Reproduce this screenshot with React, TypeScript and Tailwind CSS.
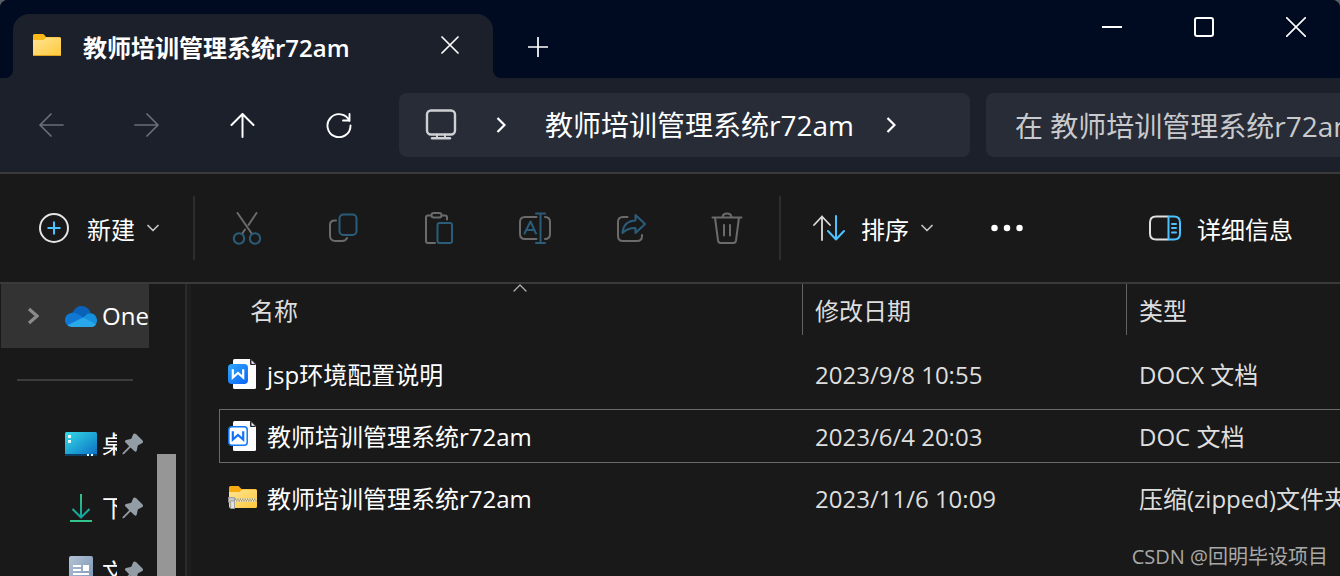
import type { ReactNode } from "react";

type IconProps = { w: number; h: number; children: ReactNode; className?: string };

function Icon({ w, h, children, className = "" }: IconProps) {
  return (
    <svg
      width={w}
      height={h}
      viewBox={`0 0 ${w} ${h}`}
      fill="none"
      stroke="currentColor"
      strokeWidth="2"
      strokeLinecap="round"
      strokeLinejoin="round"
      className={`shrink-0 ${className}`}
      aria-hidden="true"
    >
      {children}
    </svg>
  );
}

const GREY = "#6b6b6b";
const BLUE = "#2b5d7a";
const ACCENT = "#4cc2ff";

function FolderIcon() {
  return (
    <Icon w={28} h={22}>
      <defs>
        <linearGradient id="folder" x1="0" y1="0" x2="1" y2="1">
          <stop offset="0" stopColor="#ffe596" />
          <stop offset="1" stopColor="#ffc93a" />
        </linearGradient>
      </defs>
      <path d="M0 1.500Q0 0 1.500 0H9.500Q10.500 0 11.200 .8L13 3H26.500Q28 3 28 4.500V10H0Z" fill="#fbb917" stroke="none" />
      <path d="M0 6H10.500L13 3.400H26.600Q28 3.400 28 5V20.500Q28 22 26.500 22H1.500Q0 22 0 20.500Z" fill="url(#folder)" stroke="none" />
      <path d="M.5 21.500H27.500" stroke="#e0a21d" strokeWidth="1" />
    </Icon>
  );
}

function ZipIcon() {
  return (
    <Icon w={29} h={24}>
      <path d="M1 1.500Q1 0 2.500 0H10.500L13.500 3H27.500Q29 3 29 4.500V10H1Z" fill="#f7ab12" stroke="none" />
      <path d="M1 6H11.500L14 3.400H27.600Q29 3.400 29 5V20.500Q29 22 27.500 22H2.500Q1 22 1 20.500Z" fill="url(#folder)" stroke="none" />
      <path d="M7 14H28.500" stroke="#f1e6bd" strokeWidth="4" strokeLinecap="butt" />
      <path d="M7 13.200H28.500" stroke="#8d7a42" strokeWidth="1.200" strokeDasharray="1.200 1.200" strokeLinecap="butt" />
      <path d="M8.200 14.800H28.500" stroke="#8d7a42" strokeWidth="1.200" strokeDasharray="1.200 1.200" strokeLinecap="butt" />
      <path d="M.5 11.500H6.500V16H.5Z" fill="#c4c4c4" stroke="#a0a0a0" strokeWidth="1" />
      <path d="M3 15H6.500V22.500H3Z" fill="#e2e2e2" stroke="#a0a0a0" strokeWidth="1" />
    </Icon>
  );
}

function DocIcon({ filled }: { filled: boolean }) {
  return (
    <Icon w={29} h={31}>
      <defs>
        <linearGradient id="wps" x1="0" y1="0" x2="1" y2="1">
          <stop offset="0" stopColor="#2ea5ff" />
          <stop offset="1" stopColor="#0d66f5" />
        </linearGradient>
      </defs>
      <path d="M5 1.500Q5 0 6.500 0H22.500L28 5.500V28.500Q28 30 26.500 30H6.500Q5 30 5 28.500Z" fill="#fdfdfe" stroke="none" />
      <path d="M22 0V5Q22 6 23 6H28L22.500 0Z" fill="#22262e" stroke="none" />
      <path d="M23.500 1.500V4.800H26.800Z" fill="#fff" stroke="none" />
      <rect
        x=".8"
        y="5.800"
        width="18.400"
        height="18.400"
        rx="3"
        fill={filled ? "url(#wps)" : "#fff"}
        stroke={filled ? "url(#wps)" : "#1277f8"}
        strokeWidth="1.500"
      />
      <path
        d="M4.800 10.200V18.500L10 14L15.200 18.500V10.200"
        stroke={filled ? "#fff" : "#1272f5"}
        strokeWidth="2.200"
        strokeLinecap="butt"
        strokeLinejoin="miter"
      />
    </Icon>
  );
}

function OneDriveIcon() {
  return (
    <svg width="32" height="21" viewBox="0 0 32 21" className="shrink-0" aria-hidden="true">
      <path d="M7 8C9 2.500 12.500 0 16.500 0C21 0 24.500 3 25.800 7.200L20 12L9 9Z" fill="#0a62b8" />
      <path d="M12 7.500C7 5.500 0 8 0 14C0 17 1.600 19 3.500 20L19 11.800Z" fill="#0f78d4" />
      <path d="M18.500 11.500L22 8C27 5.500 32 9 32 14.500C32 17 30.500 18.500 30 19Z" fill="#1490df" />
      <path d="M2.500 19.300L18.500 11.200L31 18.500C29.500 20.500 28 21 26 21H7C5 21 3.500 20.300 2.500 19.300Z" fill="#28a8ea" />
    </svg>
  );
}

function DesktopIcon() {
  return (
    <svg width="32" height="24" viewBox="0 0 32 24" className="shrink-0" aria-hidden="true">
      <defs>
        <linearGradient id="desk" x1="0" y1="0" x2="1" y2="1">
          <stop offset="0" stopColor="#35dbe6" />
          <stop offset="1" stopColor="#0a6cc4" />
        </linearGradient>
      </defs>
      <rect width="32" height="24" rx="1.500" fill="url(#desk)" />
      <path d="M0 22H32V22.500Q32 24 30.500 24H1.500Q0 24 0 22.500Z" fill="#0b3f63" />
      <path d="M3 3H6V6H3ZM3 8H6V11H3ZM22 22H24V24H22ZM26 22H28V24H26Z" fill="#e8fbff" />
    </svg>
  );
}

function DownloadIcon() {
  return (
    <Icon w={24} h={28} className="mx-1">
      <defs>
        <linearGradient id="down" x1="0" y1="0" x2="0" y2="28" gradientUnits="userSpaceOnUse">
          <stop offset="0" stopColor="#35c481" />
          <stop offset=".8" stopColor="#12a5a0" />
        </linearGradient>
      </defs>
      <path d="M12 0V23.500M3.500 15L12 23.500L20.500 15" stroke="url(#down)" strokeLinecap="butt" />
      <path d="M1 27H23" stroke="#31c48d" strokeLinecap="butt" />
    </Icon>
  );
}

function DocumentsIcon() {
  return (
    <svg width="24" height="32" viewBox="0 0 24 32" className="mx-1 shrink-0" aria-hidden="true">
      <defs>
        <linearGradient id="docs" x1="0" y1="0" x2="1" y2="1">
          <stop offset="0" stopColor="#b3c3d7" />
          <stop offset="1" stopColor="#7590ae" />
        </linearGradient>
      </defs>
      <rect width="24" height="32" rx="2" fill="url(#docs)" />
      <path d="M4 9H12V11H4ZM4 13H12V15H4ZM14 9H20V15H14ZM4 17H20V19H4ZM4 21H20V23H4Z" fill="#fff" />
    </svg>
  );
}

function PinIcon() {
  return (
    <svg width="22" height="22" viewBox="0 0 22 22" className="shrink-0" aria-hidden="true">
      <path
        d="M11.200 1.200Q12.500 -.3 14 1L20.300 7.300Q21.800 8.800 20.300 10L15.800 12.500L14.800 17.500Q14 19.500 12.500 18.300L8.500 14.500L1.800 21.200L.5 21.300L.6 19.900L7.200 13.200L3.300 9.300Q2.200 7.800 4.200 7L9.300 5.700Z"
        fill="#929da5"
      />
    </svg>
  );
}

function ChevronDown() {
  return (
    <Icon w={12} h={8} className="text-[#c4c4c4]">
      <path d="M1 1.500L6 6.500L11 1.500" strokeWidth="1.700" />
    </Icon>
  );
}

function Divider() {
  return <div className="h-16 w-0.5 shrink-0 bg-[#2d2d2d]" />;
}

const navButtons: { label: string; disabled: boolean; icon: ReactNode }[] = [
  { label: "后退", disabled: true, icon: <path d="M25 12H2M13 1L2 12L13 23" strokeWidth="1.700" /> },
  { label: "前进", disabled: true, icon: <path d="M1 12H24M13 1L24 12L13 23" strokeWidth="1.700" /> },
  { label: "上移", disabled: false, icon: <path d="M12.500 24V1M1.500 12L12.500 1L23.500 12" /> },
  {
    label: "刷新",
    disabled: false,
    icon: <path d="M23.500 8A11.500 11.500 0 1 0 24.500 12.500M23.500 1V7.500H17" strokeWidth="1.900" />,
  },
];

const tools: { label: string; icon: ReactNode }[] = [
  {
    label: "剪切",
    icon: (
      <>
        <path d="M6.500 1L21 22M25.500 1L17.500 13M14 17.500L11 22" stroke={GREY} />
        <circle cx="8" cy="26.500" r="5.200" stroke={BLUE} />
        <circle cx="24" cy="26.500" r="5.200" stroke={BLUE} />
      </>
    ),
  },
  {
    label: "复制",
    icon: (
      <>
        <path d="M9 8.500H7.500Q3 8.500 3 13V23.500Q3 29 8.500 29H15Q19 29 20 26" stroke={GREY} />
        <rect x="12.500" y="2.500" width="17" height="20.500" rx="4" stroke={BLUE} />
      </>
    ),
  },
  {
    label: "粘贴",
    icon: (
      <>
        <path d="M7.500 3.500H5Q3 3.500 3 5.500V29Q3 31 5 31H12M19.500 3.500H22Q24 3.500 24 5.500V7.500" stroke={GREY} />
        <rect x="8.500" y="1" width="10" height="4.500" rx="2.200" stroke={GREY} />
        <rect x="14.500" y="11" width="14.500" height="20" rx="2" stroke={BLUE} />
      </>
    ),
  },
  {
    label: "重命名",
    icon: (
      <>
        <path d="M17.500 5H6Q1 5 1 10V22Q1 27 6 27H17.500M26 5Q31 5 31 10V22Q31 27 26 27" stroke={GREY} />
        <path d="M5.500 21.500L11.500 9.500L17 21.500M7.500 18H15M21.500 1.500V30.500M17 1.500H26M17 31H26" stroke={BLUE} />
      </>
    ),
  },
  {
    label: "共享",
    icon: (
      <>
        <path d="M12.500 5H8Q3 5 3 10V24Q3 29 8 29H22Q27 29 27 24V23" stroke={GREY} />
        <path d="M20.500 3L30 12L20.500 21V16Q12 16 7.500 21Q8.500 9 20.500 8.500Z" stroke={BLUE} />
      </>
    ),
  },
  {
    label: "删除",
    icon: (
      <>
        <path
          d="M1.500 5.500H30.500M4 5.500L7 28.500Q7.500 31 9.500 31H22.500Q24.500 31 25 28.500L28 5.500M11.500 5Q12 1.500 16 1.500Q20 1.500 20.500 5M13 13V23.500M19 13V23.500"
          stroke={GREY}
        />
      </>
    ),
  },
];

const places: { label: string; icon: ReactNode }[] = [
  { label: "桌面", icon: <DesktopIcon /> },
  { label: "下载", icon: <DownloadIcon /> },
  { label: "文档", icon: <DocumentsIcon /> },
];

const files: { name: string; date: string; type: string; icon: ReactNode; selected?: boolean }[] = [
  { name: "jsp环境配置说明", date: "2023/9/8 10:55", type: "DOCX 文档", icon: <DocIcon filled /> },
  { name: "教师培训管理系统r72am", date: "2023/6/4 20:03", type: "DOC 文档", icon: <DocIcon filled={false} />, selected: true },
  { name: "教师培训管理系统r72am", date: "2023/11/6 10:09", type: "压缩(zipped)文件夹", icon: <ZipIcon /> },
];

function TitleBar() {
  return (
    <header className="flex h-[78px] shrink-0 bg-[#1b202b]">
      <div className="w-[13px] shrink-0 rounded-br-lg bg-[#000a20]" />
      <div className="w-[480px] shrink-0 bg-[#000a20] pt-3.5">
        <div className="flex h-full items-center rounded-t-2xl bg-[#1b202b] pr-[31px] pb-0.5 pl-5">
          <FolderIcon />
          <h1 className="ml-[22px] flex-1 pt-1.5 text-2xl font-bold whitespace-nowrap">
            教师培训管理系统<span className="font-semibold">r72am</span>
          </h1>
          <button type="button" aria-label="关闭标签页" className="flex size-6 items-center justify-center">
            <Icon w={18} h={18}>
              <path d="M1 1L17 17M17 1L1 17" strokeWidth="1.700" />
            </Icon>
          </button>
        </div>
      </div>
      <div className="flex min-w-0 flex-1 justify-between overflow-hidden rounded-bl-lg bg-[#000a20]">
        <button type="button" aria-label="新建标签页" className="mt-4 ml-5 flex h-[62px] w-[50px] items-center justify-center">
          <Icon w={20} h={20}>
            <path d="M10 0V20M0 10H20" strokeWidth="1.700" strokeLinecap="butt" />
          </Icon>
        </button>
        <div className="-mr-0.5 flex h-[54px]">
          <button type="button" aria-label="最小化" className="flex w-[92px] items-center justify-center">
            <Icon w={20} h={20}>
              <path d="M0 10H20" strokeLinecap="butt" />
            </Icon>
          </button>
          <button type="button" aria-label="最大化" className="flex w-[92px] items-center justify-center">
            <Icon w={20} h={20}>
              <rect x="1" y="1" width="18" height="18" rx="2" />
            </Icon>
          </button>
          <button type="button" aria-label="关闭" className="flex w-[92px] items-center justify-center">
            <Icon w={20} h={20}>
              <path d="M0 0L20 20M20 0L0 20" strokeWidth="1.600" strokeLinecap="butt" />
            </Icon>
          </button>
        </div>
      </div>
    </header>
  );
}

function AddressRow() {
  return (
    <nav className="flex h-24 shrink-0 items-center border-b-2 border-[#3a3a3a] bg-[#1b202b] pl-[3px]">
      {navButtons.map((b) => (
        <button
          key={b.label}
          type="button"
          aria-label={b.label}
          disabled={b.disabled}
          className="flex h-16 w-24 shrink-0 items-center justify-center text-white disabled:text-[#6a6e77]"
        >
          <Icon w={26} h={25}>{b.icon}</Icon>
        </button>
      ))}
      <div className="ml-3 flex h-16 flex-1 items-center rounded-lg bg-[#272c37] pl-[26px] text-[28px] whitespace-nowrap">
        <button type="button" aria-label="此电脑">
          <Icon w={32} h={32} className="text-[#cfd0d3]">
            <rect x="2" y="1.500" width="28" height="24" rx="4" strokeWidth="2.400" />
            <path d="M12 25.500V29M20 25.500V29" />
            <path d="M7 29.300H25" strokeWidth="2.400" />
          </Icon>
        </button>
        <Icon w={10} h={16} className="ml-[39px]">
          <path d="M1.500 1L8.500 8L1.500 15" strokeWidth="2.200" strokeLinecap="butt" strokeLinejoin="miter" />
        </Icon>
        <button type="button" className="ml-[39px]">教师培训管理系统r72am</button>
        <Icon w={10} h={16} className="ml-8">
          <path d="M1.500 1L8.500 8L1.500 15" strokeWidth="2.200" strokeLinecap="butt" strokeLinejoin="miter" />
        </Icon>
      </div>
      <input
        type="text"
        aria-label="搜索"
        placeholder="在 教师培训管理系统r72am 中搜索"
        className="ml-4 h-16 w-[354px] shrink-0 rounded-l-lg bg-[#272c37] pt-0.5 pl-[29px] text-[28px] outline-none placeholder:text-[#c9cacd]"
      />
    </nav>
  );
}

function Toolbar() {
  return (
    <div role="toolbar" className="flex h-[110px] shrink-0 items-center border-b-2 border-[#3a3a3a] text-2xl whitespace-nowrap">
      <button type="button" className="flex w-[193px] shrink-0 items-center pl-[39px]">
        <Icon w={30} h={30} className="text-[#e4e4e4]">
          <circle cx="15" cy="15" r="14" />
          <path d="M15 8.500V21.500M8.500 15H21.500" stroke={ACCENT} strokeLinecap="butt" />
        </Icon>
        <span className="mr-3 ml-[18px] pt-1">新建</span>
        <ChevronDown />
      </button>
      <Divider />
      <div className="flex shrink-0 px-1">
        {tools.map((t) => (
          <button key={t.label} type="button" aria-label={t.label} disabled className="flex h-16 w-24 items-center justify-center">
            <Icon w={32} h={33}>{t.icon}</Icon>
          </button>
        ))}
      </div>
      <Divider />
      <button type="button" className="ml-8 flex items-center">
        <Icon w={32} h={26}>
          <path d="M9 25V1.500M1 10L9 1.500L17 10" stroke="#dcdcdc" strokeWidth="1.800" />
          <path d="M23 1V24.500M15 16L23 24.500L31 16" stroke={ACCENT} />
        </Icon>
        <span className="mr-3 ml-4 pt-1">排序</span>
        <ChevronDown />
      </button>
      <button type="button" aria-label="更多" className="ml-[58px]">
        <Icon w={32} h={8}>
          <path d="M3.500 4h.01M16 4h.01M28.500 4h.01" strokeWidth="6.500" />
        </Icon>
      </button>
      <button type="button" className="mr-[47px] ml-auto flex items-center gap-4">
        <Icon w={32} h={26} className="text-[#e0e0e0]">
          <path d="M19 1.500H7Q1 1.500 1 7.500V18.500Q1 24.500 7 24.500H19" />
          <path d="M19.500 1.500H25Q31 1.500 31 7.500V18.500Q31 24.500 25 24.500H19.500ZM23 9H27M23 13H27M23 17.500H27" stroke={ACCENT} />
        </Icon>
        <span className="pt-1">详细信息</span>
      </button>
    </div>
  );
}

function Sidebar() {
  return (
    <aside className="flex w-[191px] shrink-0 overflow-hidden text-2xl whitespace-nowrap">
      <div className="w-[149px] shrink-0 overflow-hidden pl-px">
        <a href="#onedrive" className="flex h-16 items-center bg-[#333333] pl-[26px]">
          <Icon w={12} h={18} className="text-[#8a8a8a]">
            <path d="M2 2L10 9L2 16" strokeWidth="3.200" strokeLinecap="butt" strokeLinejoin="miter" />
          </Icon>
          <span className="mr-[5px] ml-[26px]">
            <OneDriveIcon />
          </span>
          OneDrive
        </a>
        <div className="flex h-16 items-center px-4">
          <hr className="w-full border-t-2 border-[#3c3c3c]" />
        </div>
        {places.map((p) => (
          <a key={p.label} href="#place" className="flex h-16 items-center pl-16">
            {p.icon}
            <span className="mr-[5px] ml-[5px] w-[15px] shrink-0 overflow-hidden">{p.label}</span>
            <PinIcon />
          </a>
        ))}
      </div>
      <div className="ml-2 flex w-[19px] shrink-0 flex-col pt-[170px]">
        <div className="flex-1 bg-[#969696]" />
      </div>
      <div className="ml-[9px] w-1.5 border-l-2 border-[#2b2b2b] bg-[#1e1e1e]" />
    </aside>
  );
}

function FileTable() {
  return (
    <main className="min-w-0 flex-1 overflow-hidden text-2xl">
      <table className="w-full table-fixed border-collapse text-left whitespace-nowrap text-[#dedede]">
        <thead>
          <tr className="h-[59px] align-top">
            <th className="p-0 font-normal">
              <div className="relative flex h-[51px] items-center pt-0.5 pl-[59px]">
                名称
                <Icon w={14} h={8} className="absolute top-0 left-[322px] text-[#b0b0b0]">
                  <path d="M1 7L7 1L13 7" strokeWidth="1.300" />
                </Icon>
              </div>
            </th>
            <th className="w-[324px] p-0 font-normal">
              <div className="flex h-[51px] items-center border-l border-[#636363] pt-0.5 pl-3">修改日期</div>
            </th>
            <th className="w-[214px] p-0 font-normal">
              <div className="flex h-[51px] items-center border-l border-[#636363] pt-0.5 pl-3">类型</div>
            </th>
          </tr>
        </thead>
        <tbody>
          {files.map((f) => {
            const line = f.selected ? "border-[#6a6a6a]" : "border-transparent";
            return (
              <tr key={f.date} className="h-[62px]">
                <td className="p-0 pl-7 text-white">
                  <div className={`flex h-[54px] items-center border-y border-l pl-2 ${line}`}>
                    <span className="mr-2 flex w-[31px] shrink-0">{f.icon}</span>
                    <span className="pt-0.5">{f.name}</span>
                  </div>
                </td>
                <td className="p-0">
                  <div className={`flex h-[54px] items-center border-y pt-0.5 pl-[13px] ${line}`}>{f.date}</div>
                </td>
                <td className="p-0">
                  <div className={`flex h-[54px] items-center border-y pt-0.5 pl-[13px] ${line}`}>{f.type}</div>
                </td>
              </tr>
            );
          })}
        </tbody>
      </table>
    </main>
  );
}

export default function App() {
  return (
    <div className="h-screen bg-[#5a5f66] font-['Open_Sans','Noto_Sans_CJK_SC',sans-serif] text-white">
      <div className="relative flex h-full flex-col overflow-hidden rounded-t-lg bg-[#191919]">
        <TitleBar />
        <AddressRow />
        <Toolbar />
        <div className="flex min-h-0 flex-1">
          <Sidebar />
          <FileTable />
        </div>
        <p className="absolute right-3 bottom-[5px] text-xl leading-7 text-[#a8a8a8]">CSDN @回明毕设项目</p>
      </div>
    </div>
  );
}
